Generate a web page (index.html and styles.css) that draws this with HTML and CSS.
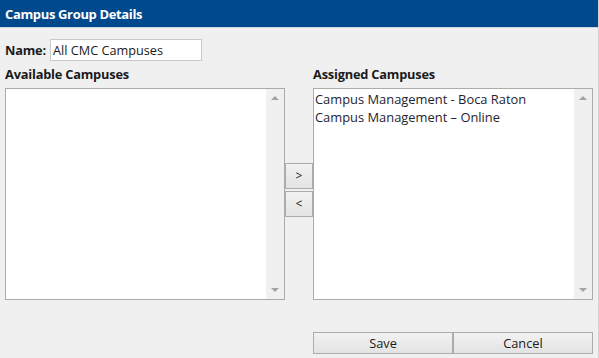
FILE: index.html
```html
<!DOCTYPE html>
<html>
<head>
<meta charset="utf-8">
<link rel="stylesheet" href="styles.css">
</head>
<body>
<div class="window">
  <div class="titlebar">Campus Group Details</div>
  <div class="content">
    <div class="name-row">
      <span class="label">Name:</span>
      <div class="textbox">All CMC Campuses</div>
    </div>
    <div class="lists">
      <div class="col">
        <div class="label caption">Available Campuses</div>
        <div class="listbox">
          <div class="items"></div>
          <div class="scrollbar">
            <span class="arrow up"></span>
            <span class="arrow down"></span>
          </div>
        </div>
      </div>
      <div class="movers">
        <div class="btn mover">&gt;</div>
        <div class="btn mover">&lt;</div>
      </div>
      <div class="col">
        <div class="label caption">Assigned Campuses</div>
        <div class="listbox">
          <div class="items">
            <div class="item">Campus Management - Boca Raton</div>
            <div class="item">Campus Management – Online</div>
          </div>
          <div class="scrollbar">
            <span class="arrow up"></span>
            <span class="arrow down"></span>
          </div>
        </div>
      </div>
    </div>
    <div class="footer">
      <div class="btn action">Save</div>
      <div class="btn action">Cancel</div>
    </div>
  </div>
</div>
</body>
</html>
```
FILE: styles.css
```css
html, body {
  margin: 0;
  padding: 0;
}
body {
  width: 599px;
  height: 358px;
  overflow: hidden;
  background: #f0f0f0;
  font-family: "Open Sans", "Noto Sans", sans-serif;
  font-size: 12px;
  color: #1a1a1a;
}
.window {
  width: 598px;
  height: 358px;
  border-right: 1px solid #d4d4d4;
  box-sizing: content-box;
}
.titlebar {
  height: 28px;
  background: #00498c;
  color: #ffffff;
  font-weight: 700;
  font-size: 13px;
  line-height: 29px;
  padding-left: 5px;
  letter-spacing: -0.35px;
  border-bottom: 1px solid #c9d6e4;
  box-sizing: border-box;
}
.content {
  padding: 0 5px;
}
.label {
  font-weight: 700;
  font-size: 12.8px;
  letter-spacing: -0.2px;
}
.name-row {
  display: flex;
  align-items: center;
  margin-top: 11px;
  height: 22px;
}
.name-row .label {
  width: 45px;
}
.textbox {
  width: 152px;
  height: 22px;
  box-sizing: border-box;
  background: #ffffff;
  border: 1px solid #c8c8c8;
  padding-left: 2px;
  line-height: 20px;
  font-size: 12.7px;
}
.lists {
  display: grid;
  grid-template-columns: 280px 28px 280px;
  margin-top: 4px;
}
.caption {
  height: 23px;
  line-height: 18px;
}
.listbox {
  display: flex;
  height: 212px;
  box-sizing: border-box;
  background: #ffffff;
  border: 1px solid #ababab;
}
.items {
  flex: 1;
  padding-top: 1px;
  padding-left: 1px;
}
.item {
  font-size: 12.9px;
  line-height: 18px;
  color: #1e2430;
}
.scrollbar {
  width: 18px;
  background: #f0f0f0;
  display: flex;
  flex-direction: column;
  justify-content: space-between;
  align-items: center;
  padding: 7px 0;
}
.arrow {
  width: 0;
  height: 0;
  border-left: 4px solid transparent;
  border-right: 4px solid transparent;
}
.arrow.up {
  border-bottom: 4px solid #a3a3a3;
}
.arrow.down {
  border-top: 4px solid #a3a3a3;
}
.movers {
  display: flex;
  flex-direction: column;
  gap: 2px;
  padding-top: 98px;
}
.btn {
  box-sizing: border-box;
  border: 1px solid #acacac;
  background: linear-gradient(#f2f2f2, #e3e3e3);
  text-align: center;
  color: #1a1a1a;
}
.mover {
  height: 26px;
  line-height: 24px;
}
.footer {
  display: flex;
  justify-content: flex-end;
  margin-top: 32px;
}
.action {
  width: 140px;
  height: 22px;
  line-height: 20px;
  font-size: 12.8px;
}
```
